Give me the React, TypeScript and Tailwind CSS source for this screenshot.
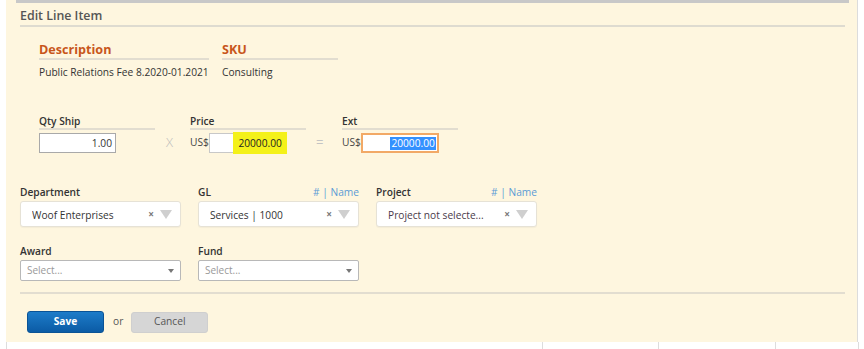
import { ReactNode } from "react";

const font = { fontFamily: '"Open Sans", "Liberation Sans", sans-serif' };

const Caret = () => (
    <svg width="12" height="9" viewBox="0 0 12 9" className="text-[#cfcfcf]">
        <path d="M0 0 L12 0 L6 9 Z" fill="currentColor" />
    </svg>
);

const SmallCaret = () => (
    <svg width="6" height="4" viewBox="0 0 6 4" className="text-[#777]">
        <path d="M0 0 L6 0 L3 4 Z" fill="currentColor" />
    </svg>
);

const ClearSelect = ({ value, color = "text-[#333]" }: { value: string; color?: string }) => (
    <div className="flex items-center w-[161px] h-[26px] bg-white rounded-[3px] border border-[#e6e2d6] shadow-[0_1px_1px_rgba(0,0,0,0.04)] pl-[11px] pr-[8px]">
        <span className={`flex-1 pt-[3px] text-[10.2px] truncate ${color}`}>{value}</span>
        <span className="text-[10px] text-[#777] font-bold mr-[6px] leading-none">×</span>
        <Caret />
    </div>
);

const PlainSelect = () => (
    <div className="flex items-center w-[161px] h-[21px] bg-white rounded-[2px] border border-[#b8b8b8] pl-[6px] pr-[6px]">
        <span className="flex-1 text-[10px] text-[#999]">Select...</span>
        <SmallCaret />
    </div>
);

const Field = ({ label, extra, children }: { label: string; extra?: boolean; children: ReactNode }) => (
    <div className="flex flex-col w-[161px]">
        <div className="flex justify-between items-center h-[14px] mb-[2px]">
            <span className="text-[10.2px] font-semibold text-[#333] leading-[14px]">{label}</span>
            {extra && <span className="text-[10.2px] text-[#5b9bd5] leading-[14px]">#&nbsp;|&nbsp;Name</span>}
        </div>
        {children}
    </div>
);

const ColHead = ({ label }: { label: string }) => (
    <div className="w-[116px] border-b-2 border-[#e2ddd0] text-[10.2px] leading-[13px] font-semibold text-[#333]">{label}</div>
);

export default function App() {
    return (
        <div className="w-[864px] h-[349px] bg-white overflow-hidden" style={font}>
            <div className="ml-[6px] w-[852px] h-[342px] bg-[#fef6df] border-r border-[#dcdcdc] flex flex-col">
                <div className="ml-[10px] w-[833px] h-[3px] bg-[#c8c8c8]" />
                <div className="ml-[14px] w-[825px] mt-[5px] border-b-2 border-[#dedbd0] pb-[1px] text-[12.4px] font-semibold text-[#555] leading-[16px]">
                    Edit Line Item
                </div>

                <div className="flex gap-[13px] ml-[33px] mt-[14px]">
                    <div className="flex flex-col w-[170px]">
                        <div className="border-b-2 border-[#e2ddd0] text-[12.6px] font-bold text-[#c8561b] leading-[17px]">Description</div>
                        <div className="mt-[5px] text-[10.2px] text-[#333] leading-[14px] whitespace-nowrap">Public Relations Fee 8.2020-01.2021</div>
                    </div>
                    <div className="flex flex-col w-[116px]">
                        <div className="border-b-2 border-[#e2ddd0] text-[12.6px] font-bold text-[#c8561b] leading-[17px]">SKU</div>
                        <div className="mt-[5px] text-[10.2px] text-[#333] leading-[14px]">Consulting</div>
                    </div>
                </div>

                <div className="flex ml-[33px] mt-[36px]">
                    <div className="flex flex-col w-[151px]">
                        <ColHead label="Qty Ship" />
                        <div className="mt-[3px] w-[77px] h-[20px] bg-white border border-[#a9a9a9] text-right pr-[3px] text-[10.2px] text-[#333] leading-[18px]">1.00</div>
                    </div>
                    <div className="flex flex-col w-[152px] relative">
                        <ColHead label="Price" />
                        <div className="mt-[3px] flex items-center h-[20px] text-[10.2px] text-[#444]">
                            <span>US$</span>
                            <div className="w-[78px] h-[20px] bg-white border border-[#c8c8c8] flex justify-end items-center pr-[2px]">
                                <span className="bg-[#f4f11a] text-[#222] px-[2px] py-[2px] leading-[12px] shadow-[0_0_0_3px_#f4f11a]">20000.00</span>
                            </div>
                        </div>
                        <span className="absolute left-[-24px] top-[18px] text-[13px] text-[#bbb] font-light">X</span>
                    </div>
                    <div className="flex flex-col w-[116px] relative">
                        <ColHead label="Ext" />
                        <div className="mt-[3px] flex items-center h-[20px] text-[10.2px] text-[#444]">
                            <span>US$</span>
                            <div className="w-[78px] h-[20px] bg-white border-2 border-[#f2a966] flex justify-end items-center pr-[1px]">
                                <span className="bg-[#3390ff] text-white leading-[13px] px-[1px]">20000.00</span>
                            </div>
                        </div>
                        <span className="absolute left-[-26px] top-[18px] text-[13px] text-[#c4c4c4]">=</span>
                    </div>
                </div>

                <div className="flex gap-[17px] ml-[14px] mt-[32px]">
                    <Field label="Department">
                        <ClearSelect value="Woof Enterprises" />
                    </Field>
                    <Field label="GL" extra>
                        <ClearSelect value="Services | 1000" />
                    </Field>
                    <Field label="Project" extra>
                        <ClearSelect value="Project not selecte..." color="text-[#4a3a4a]" />
                    </Field>
                </div>

                <div className="flex gap-[17px] ml-[14px] mt-[17px]">
                    <Field label="Award">
                        <PlainSelect />
                    </Field>
                    <Field label="Fund">
                        <PlainSelect />
                    </Field>
                </div>

                <div className="ml-[14px] w-[825px] mt-[11px] border-b-2 border-[#e2ddd0]" />

                <div className="flex items-center ml-[21px] mt-[17px]">
                    <button className="w-[77px] h-[22px] rounded-[3px] bg-gradient-to-b from-[#1d7cc9] to-[#0b5ba5] border border-[#0a5396] text-white text-[10.2px] font-bold">
                        Save
                    </button>
                    <span className="ml-[9px] mr-[8px] text-[10.2px] text-[#555]">or</span>
                    <button className="w-[77px] h-[21px] rounded-[3px] bg-[#d6d6d6] border border-[#cfcfcf] text-[#555] text-[10.2px]">
                        Cancel
                    </button>
                </div>
            </div>
            <div className="flex h-[7px] relative">
                <div className="ml-[6px] w-px h-[7px] bg-[#ddd]" />
                <div className="ml-[535px] w-px h-[7px] bg-[#ddd]" />
                <div className="ml-[115px] w-px h-[7px] bg-[#ddd]" />
                <div className="ml-[116px] w-px h-[7px] bg-[#ddd]" />
                <div className="ml-[82px] w-px h-[7px] bg-[#ddd]" />
            </div>
        </div>
    );
}
